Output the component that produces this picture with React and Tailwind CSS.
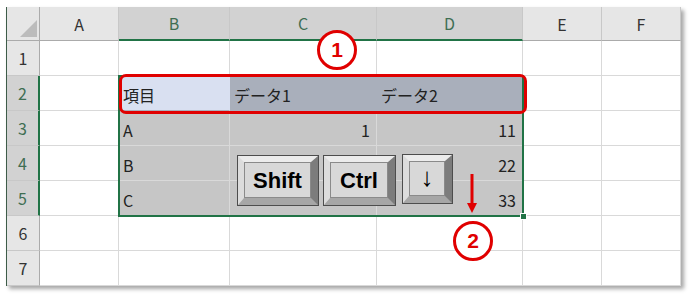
import React from "react";

const cols = ["A", "B", "C", "D", "E", "F"];
const selCols = ["B", "C", "D"];
const arial = { fontFamily: '"Liberation Sans", Arial, sans-serif' };

function Key({ className, children, textClass = "text-[22px] font-bold" }) {
  return (
    <div className={`border border-[#4d4d4d] ${className}`}>
      <div className="w-full h-full border-t-[6px] border-l-[6px] border-r-[7px] border-b-[7px] border-t-[#ececec] border-l-[#dcdcdc] border-r-[#7c7c7c] border-b-[#a6a6a6]">
        <div
          className={`w-full h-full bg-[#d8d8d8] border border-[#8a8a8a] flex items-center justify-center text-black ${textClass}`}
          style={arial}
        >
          {children}
        </div>
      </div>
    </div>
  );
}

function Cell({ children, className = "" }) {
  return (
    <div className={`border-r border-b border-[#d9d9d9] flex items-center px-[4px] pt-[3px] text-[16px] text-[#222] whitespace-nowrap ${className}`}>
      {children}
    </div>
  );
}

function Badge({ n, className }) {
  return (
    <div
      className={`absolute w-[40px] h-[40px] rounded-full border-[3px] border-[#e00000] bg-white flex items-center justify-center text-[#e00000] font-bold text-[21px] ${className}`}
      style={arial}
    >
      {n}
    </div>
  );
}

export default function App() {
  const font = '"Noto Sans CJK JP", "Noto Sans", sans-serif';
  const rows = [1, 2, 3, 4, 5, 6, 7];
  const data = {
    2: { B: "項目", C: "データ1", D: "データ2" },
    3: { B: "A", C: "1", D: "11" },
    4: { B: "B", D: "22" },
    5: { B: "C", D: "33" },
  };
  const cellBg = (r, c) => {
    if (r === 2) {
      if (c === "B") return "bg-[#d9e0f1] border-r-[#d9e0f1] border-b-[#a9afbb]";
      if (c === "C" || c === "D") return "bg-[#a9afbb] border-r-[#a9afbb] border-b-[#a9afbb]";
    }
    if (r >= 3 && r <= 5 && selCols.includes(c)) return "bg-[#c6c6c6] border-[#d2d2d2]";
    return "bg-white";
  };
  const align = (r, c) => (r >= 3 && (c === "C" || c === "D") ? "justify-end pr-[6px]" : "");

  return (
    <div className="w-[689px] h-[297px] bg-white pt-[7px] pl-[6px]" style={{ fontFamily: font }}>
      <div className="relative w-[675px] border-l border-[#3d5c48] shadow-[3px_3px_4px_rgba(0,0,0,0.35)]">
        <div className="grid grid-cols-[33px_79px_111px_147px_146px_79px_79px] grid-rows-[34px_repeat(7,35px)]">
          <div className="relative bg-[#e6e6e6] border-r border-b border-[#ababab]">
            <div className="absolute left-[13px] top-[13px] w-0 h-0 border-l-[17px] border-l-transparent border-b-[17px] border-b-[#bcbcbc]" />
          </div>
          {cols.map((c) => {
            const sel = selCols.includes(c);
            return (
              <div
                key={c}
                className={`flex items-center justify-center text-[16px] border-r border-[#c8c8c8] ${
                  sel
                    ? "bg-[#d2d2d2] text-[#3f6e52] border-b-2 border-b-[#217346]"
                    : "bg-[#e6e6e6] text-[#333] border-b border-b-[#ababab]"
                }`}
              >
                {c}
              </div>
            );
          })}
          {rows.map((r) => {
            const sel = r >= 2 && r <= 5;
            return (
              <React.Fragment key={r}>
                <div
                  className={`flex items-center justify-center text-[16px] border-b border-[#c8c8c8] ${
                    sel
                      ? "bg-[#d2d2d2] text-[#3f6e52] border-r-2 border-r-[#217346]"
                      : "bg-[#e6e6e6] text-[#333] border-r border-r-[#ababab]"
                  }`}
                >
                  {r}
                </div>
                {cols.map((c) => (
                  <Cell key={c} className={`${cellBg(r, c)} ${align(r, c)}`}>
                    {data[r] && data[r][c]}
                  </Cell>
                ))}
              </React.Fragment>
            );
          })}
        </div>

        {/* selection border + fill handle */}
        <div className="absolute left-[111px] top-[68px] w-[406px] h-[142px] border-2 border-[#217346] pointer-events-none" />
        <div className="absolute left-[513px] top-[206px] w-[7px] h-[7px] bg-[#217346] border border-white" />

        {/* red rounded rectangle */}
        <div className="absolute left-[112px] top-[67px] w-[408px] h-[40px] border-[3px] border-[#e00000] rounded-[7px]" />

        <Badge n="1" className="left-[310px] top-[23px]" />
        <Badge n="2" className="left-[446px] top-[214px]" />

        {/* arrow */}
        <svg className="absolute left-[459px] top-[166px]" width="12" height="41" viewBox="0 0 12 41">
          <line x1="6" y1="1" x2="6" y2="32" stroke="#e00000" strokeWidth="3" />
          <polygon points="1,30 11,30 6,40" fill="#e00000" />
        </svg>

        {/* keys overlay */}
        <div className="absolute left-[230px] top-[147px] flex items-start">
          <Key className="mt-[1px] w-[82px] h-[51px]">Shift</Key>
          <Key className="ml-[4px] mt-[1px] w-[73px] h-[51px]">Ctrl</Key>
          <Key className="ml-[6px] w-[51px] h-[50px]" textClass="text-[26px] font-bold pb-[2px]">↓</Key>
        </div>
      </div>
    </div>
  );
}
